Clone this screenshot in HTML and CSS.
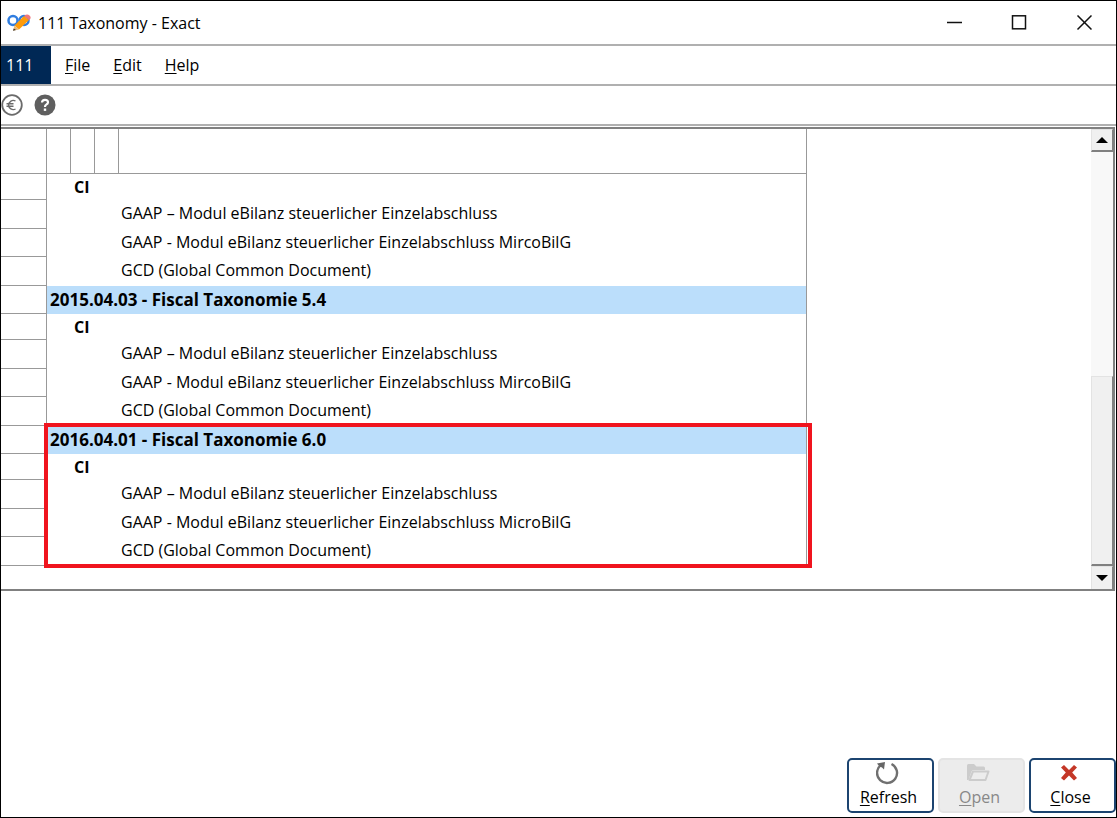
FILE: index.html
```
<!DOCTYPE html>
<html lang="en">
<head>
    <meta charset="UTF-8">
    <title>111 Taxonomy - Exact</title>
    <link rel="stylesheet" href="styles.css">
</head>
<body>
    <div class="window">
        <header class="titlebar">
            <svg class="app-icon" width="24" height="20" viewBox="0 0 24 20">
                <circle cx="6" cy="7.500" r="4.500" fill="none" stroke="#2f7de0" stroke-width="2.500"/>
                <circle cx="17" cy="7.500" r="4.500" fill="none" stroke="#2f7de0" stroke-width="2.500"/>
                <path d="M7.500 12.500 L17 3 L22 7 L12 16.500 Z" fill="#ff9c0a"/>
                <path d="M17 3 Q20 0.500 22.500 2.500 Q25 5 22 7 Z" fill="#f0787c"/>
                <path d="M7.500 12.500 L12 16.500 L6 17.800 Z" fill="#e8b878"/>
                <path d="M6.800 15.500 L9 17 L6 17.800 Z" fill="#333"/>
            </svg>
            <h1>111 Taxonomy - Exact</h1>
            <div class="window-controls">
                <button type="button" aria-label="Minimize">
                    <svg width="16" height="16" viewBox="0 0 16 16"><path d="M1 7.500H16" stroke="#111" stroke-width="1.500"/></svg>
                </button>
                <button type="button" aria-label="Maximize">
                    <svg width="16" height="16" viewBox="0 0 16 16"><rect x="1.500" y="0.800" width="13" height="13" fill="none" stroke="#111" stroke-width="1.500"/></svg>
                </button>
                <button type="button" aria-label="Close window">
                    <svg width="16" height="16" viewBox="0 0 16 16"><path d="M1.500 0.500L15.500 14.500M15.500 0.500L1.500 14.500" stroke="#111" stroke-width="1.500"/></svg>
                </button>
            </div>
        </header>

        <nav class="menubar">
            <span class="company">111</span>
            <a href="#"><u>F</u>ile</a>
            <a href="#"><u>E</u>dit</a>
            <a href="#"><u>H</u>elp</a>
        </nav>

        <div class="toolbar">
            <button type="button" aria-label="Currency">
                <svg width="22" height="22" viewBox="0 0 22 22" fill="none" stroke="#6b6b6b">
                    <circle cx="11" cy="11" r="9.800" stroke-width="1.800"/>
                    <path d="M14.500 7A4.600 4.600 0 1 0 14.500 15M5.500 9.700H12.500M5.500 12.300H12.500" stroke-width="1.400"/>
                </svg>
            </button>
            <button type="button" aria-label="Help">
                <svg width="22" height="22" viewBox="0 0 22 22">
                    <circle cx="11" cy="11" r="10.500" fill="#5f5f5f"/>
                    <path d="M8 8.500Q8 5.800 11 5.800Q14 5.800 14 8.300Q14 9.800 12.300 10.600Q11 11.300 11 13" fill="none" stroke="#fff" stroke-width="2.200"/>
                    <rect x="9.800" y="14.500" width="2.400" height="2.400" fill="#fff"/>
                </svg>
            </button>
        </div>

        <main class="pane">
            <div class="list">
                <table class="taxonomy">
                    <colgroup>
                        <col class="col-gutter">
                        <col class="col-level">
                        <col class="col-level">
                        <col class="col-level">
                        <col class="col-name">
                    </colgroup>
                    <thead>
                        <tr><th></th><th></th><th></th><th></th><th></th></tr>
                    </thead>
                    <tbody>
                        <tr class="country"><td></td><td></td><td colspan="3">CI</td></tr>
                        <tr class="module tall"><td></td><td colspan="3"></td><td>GAAP – Modul eBilanz steuerlicher Einzelabschluss</td></tr>
                        <tr class="module"><td></td><td colspan="3"></td><td>GAAP - Modul eBilanz steuerlicher Einzelabschluss MircoBilG</td></tr>
                        <tr class="module tall"><td></td><td colspan="3"></td><td>GCD (Global Common Document)</td></tr>
                    </tbody>
                    <tbody>
                        <tr class="version"><td></td><td colspan="4">2015.04.03 - Fiscal Taxonomie 5.4</td></tr>
                        <tr class="country"><td></td><td></td><td colspan="3">CI</td></tr>
                        <tr class="module tall"><td></td><td colspan="3"></td><td>GAAP – Modul eBilanz steuerlicher Einzelabschluss</td></tr>
                        <tr class="module"><td></td><td colspan="3"></td><td>GAAP - Modul eBilanz steuerlicher Einzelabschluss MircoBilG</td></tr>
                        <tr class="module tall"><td></td><td colspan="3"></td><td>GCD (Global Common Document)</td></tr>
                    </tbody>
                    <tbody class="marked">
                        <tr class="version"><td></td><td colspan="4">2016.04.01 - Fiscal Taxonomie 6.0</td></tr>
                        <tr class="country"><td></td><td></td><td colspan="3">CI</td></tr>
                        <tr class="module tall"><td></td><td colspan="3"></td><td>GAAP – Modul eBilanz steuerlicher Einzelabschluss</td></tr>
                        <tr class="module"><td></td><td colspan="3"></td><td>GAAP - Modul eBilanz steuerlicher Einzelabschluss MicroBilG</td></tr>
                        <tr class="module tall"><td></td><td colspan="3"></td><td>GCD (Global Common Document)</td></tr>
                    </tbody>
                </table>
            </div>
            <div class="scrollbar">
                <button type="button" aria-label="Scroll up">
                    <svg width="12" height="6" viewBox="0 0 12 6"><path d="M6 0L12 6H0Z"/></svg>
                </button>
                <div class="track"><div class="thumb"></div></div>
                <button type="button" aria-label="Scroll down">
                    <svg width="12" height="6" viewBox="0 0 12 6"><path d="M0 0H12L6 6Z"/></svg>
                </button>
            </div>
        </main>

        <footer class="actions">
            <button type="button">
                <svg width="26" height="24" viewBox="2 2 26 24">
                    <path d="M17.500 4A10 10 0 1 1 7 5" fill="none" stroke="#707070" stroke-width="2.400"/>
                    <path d="M3 3.500L11 2L10 9.500L8 7.500L5 6Z" fill="#666"/>
                </svg>
                <span><u>R</u>efresh</span>
            </button>
            <button type="button" disabled>
                <svg width="26" height="24" viewBox="3 2 26 24">
                    <path d="M3 20V5.500Q3 4 4.500 4H10L12.500 6.500H19.500Q21 6.500 21 8V10H9.500Q8 10 7.500 11.500L4.500 20Z" fill="#ccc"/>
                    <path d="M9 11.500H24.500L21.500 20H5.500Z" fill="#ececec" stroke="#ccc" stroke-width="2" stroke-linejoin="round"/>
                </svg>
                <span><u>O</u>pen</span>
            </button>
            <button type="button">
                <svg width="26" height="24" viewBox="2 1 26 24">
                    <path d="M5 6.500L8 4L13 9L18 4L21 6.500L16.200 11.500L21 17L18 19.500L13 14.500L8 19.500L5 17L9.800 11.500Z" fill="#c43727"/>
                </svg>
                <span><u>C</u>lose</span>
            </button>
        </footer>
    </div>
</body>
</html>
```
FILE: styles.css
```
* {
    box-sizing: border-box;
}
body {
    margin: 0;
    font-family: "Open Sans", "Noto Sans", sans-serif;
    font-size: 16px;
    color: #000;
    background-color: #fff;
}
button {
    padding: 0;
    border: none;
    background: none;
    font-family: inherit;
    font-size: inherit;
    color: inherit;
}
svg {
    display: block;
}
.window {
    display: flex;
    flex-direction: column;
    min-height: 100vh;
    border: 1px solid #000;
}

/* title bar */
.titlebar {
    display: flex;
    align-items: center;
    height: 45px;
    padding-left: 6px;
    border-bottom: 2px solid #b0b0b0;
}
.titlebar h1 {
    margin: 0 auto 0 7px;
    font-size: 16px;
    line-height: 24px;
    font-weight: normal;
}
.window-controls {
    display: flex;
}
.window-controls button {
    display: flex;
    justify-content: center;
    width: 65px;
}

/* menu */
.menubar {
    display: flex;
    align-items: center;
    gap: 23px;
    height: 40px;
    border-bottom: 2px solid #b0b0b0;
}
.menubar a {
    color: #000;
    text-decoration: none;
}
.company {
    width: 50px;
    margin-right: -9px;
    padding-left: 5px;
    line-height: 38px;
    color: #fff;
    background-color: #002855;
}
u {
    text-underline-offset: 2px;
}
.toolbar {
    display: flex;
    align-items: center;
    gap: 11px;
    height: 40px;
    border-bottom: 2px solid #b0b0b0;
}

/* taxonomy list */
.pane {
    display: flex;
    height: 464px;
    margin: 1px 1px 0 0;
    border: 2px solid #808080;
    border-left: none;
}
.list {
    flex: 1;
    overflow: hidden;
}
.taxonomy {
    width: 806px;
    table-layout: fixed;
    border-collapse: separate;
    border-spacing: 0;
}
.col-gutter {
    width: 46px;
}
.col-level {
    width: 24px;
}
.taxonomy th {
    height: 45px;
    padding: 0;
    border-right: 1px solid #999;
    border-bottom: 1px solid #999;
}
.taxonomy td {
    height: 28px;
    padding: 0 0 0 3px;
    line-height: 26px;
    white-space: nowrap;
}
.taxonomy .country td {
    height: 26px;
}
.taxonomy .module td {
    padding-left: 2px;
    vertical-align: top;
}
.taxonomy .tall td {
    height: 29px;
}
.taxonomy td:first-child {
    border-right: 1px solid #999;
    border-bottom: 1px solid #999;
}
.taxonomy td:last-child {
    border-right: 1px solid #999;
}
.version td,
.country td {
    font-weight: bold;
}
.version td {
    font-size: 17px;
}
.version td:last-child {
    background-color: #bbdefb;
}
.marked {
    position: relative;
}
.marked::after {
    content: "";
    position: absolute;
    inset: -3px -5px -2px 43px;
    border: 4px solid #f0141e;
}

/* scrollbar */
.scrollbar {
    display: flex;
    flex-direction: column;
    width: 22px;
}
.scrollbar button,
.thumb {
    background-color: #f0f0f0;
    border: 1px solid #e3e3e3;
    border-right-color: #808080;
    border-bottom: 2px solid #808080;
}
.scrollbar button {
    display: flex;
    align-items: center;
    justify-content: center;
    height: 23px;
}
.scrollbar button:last-child {
    border-bottom: none;
}
.track {
    display: flex;
    flex: 1;
    flex-direction: column;
    justify-content: flex-end;
    background-color: #f8f8f8;
}
.thumb {
    height: 46%;
}

/* buttons */
.actions {
    display: flex;
    justify-content: flex-end;
    gap: 4px;
    margin-top: auto;
    padding-bottom: 4px;
}
.actions button {
    display: flex;
    flex-direction: column;
    align-items: center;
    width: 87px;
    height: 55px;
    padding: 2px 4px 0 0;
    border: 2px solid #1c4470;
    border-radius: 5px;
    line-height: 22px;
    background-color: #fff;
}
.actions button:disabled {
    color: #888;
    border-color: #e4e4e4;
    background-color: #ececec;
}
```
